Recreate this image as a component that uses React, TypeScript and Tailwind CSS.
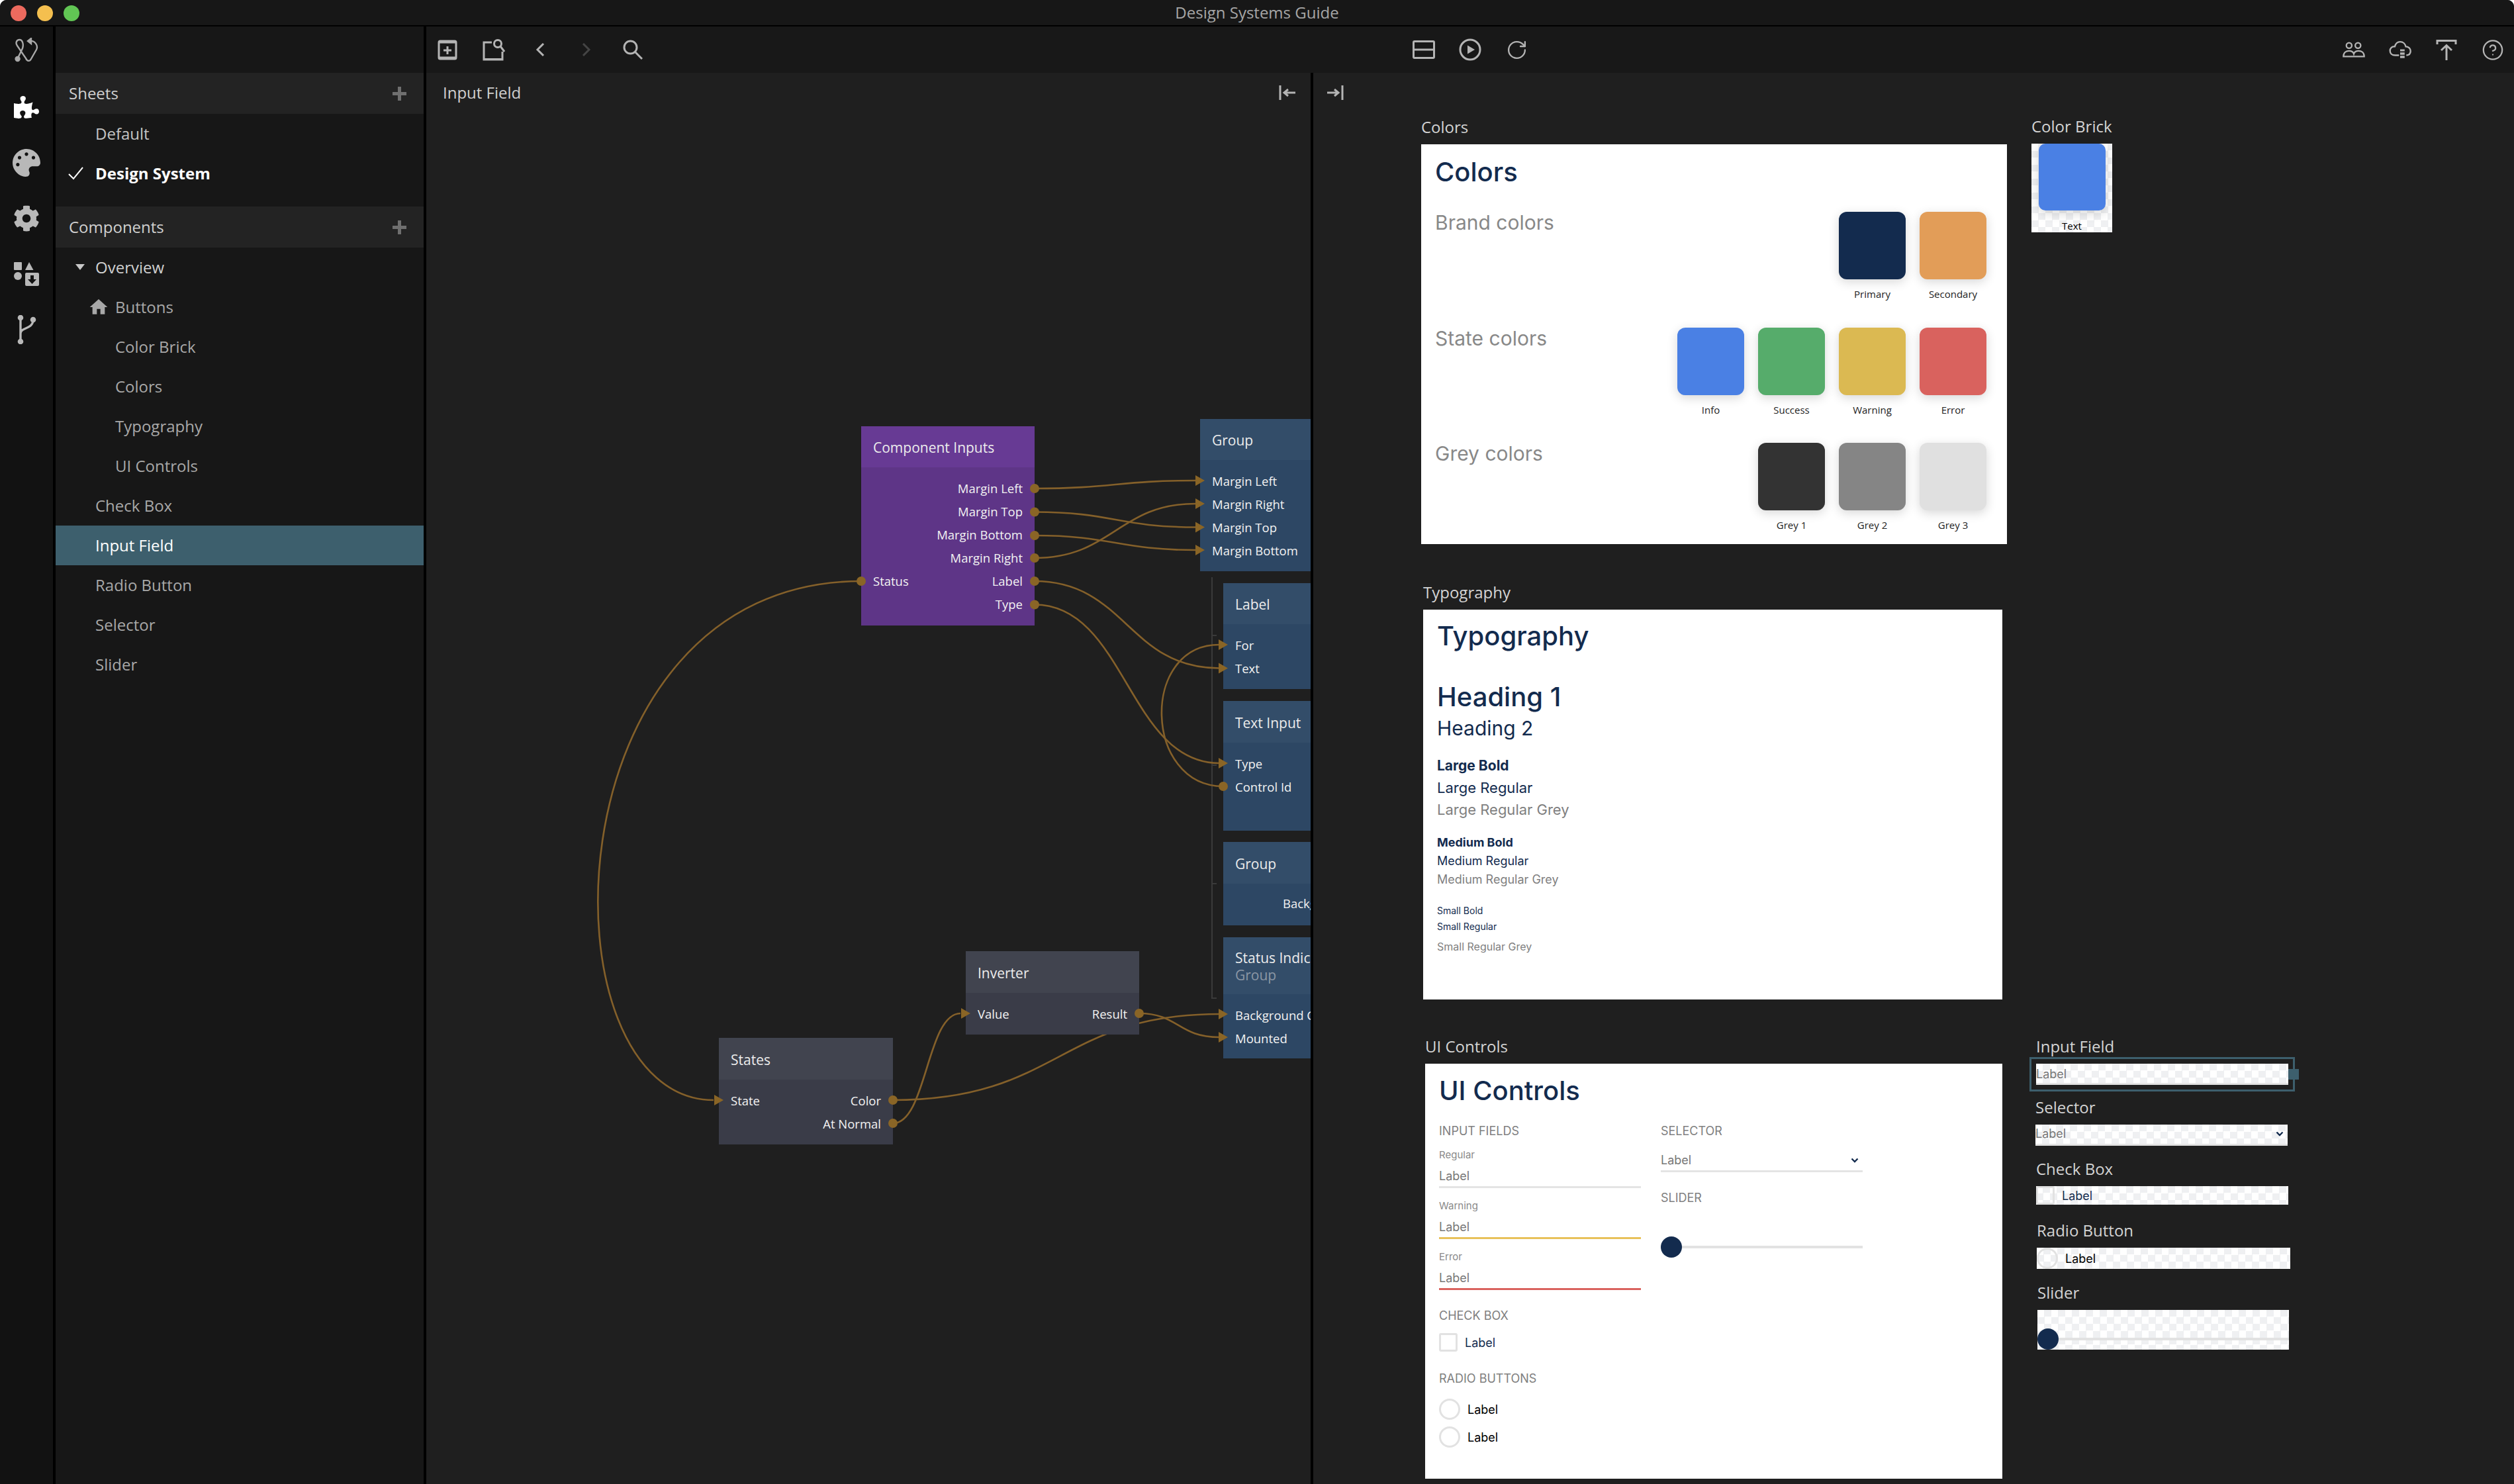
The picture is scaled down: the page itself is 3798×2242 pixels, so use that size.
import { FaPuzzlePiece, FaPalette, FaCog } from 'react-icons/fa'
import { MdHome } from 'react-icons/md'
import { RotateCw, CircleHelp } from 'lucide-react'
import type { ReactNode } from 'react'

const INK = '#b4b4b4'

const wires = [
  'M1563 738 C1680 738 1690 726 1806 726',
  'M1563 773.5 C1680 773.5 1690 796.5 1806 796.5',
  'M1563 809 C1680 809 1690 831 1806 831',
  'M1563 843 C1680 843 1690 761 1806 761',
  'M1563 878 C1700 878 1705 1009.5 1842 1009.5',
  'M1563 913.5 C1700 913.5 1705 1153 1842 1153',
  'M1848 1188 C1728 1188 1722 974 1842 974',
  'M1301 878 C821 878 813 1662 1078 1662',
  'M1349 1697 C1400 1697 1400 1531 1451 1531',
  'M1349 1662 C1600 1662 1600 1532 1842 1532',
  'M1721 1531 C1780 1531 1780 1567 1842 1567',
]

const dots = [
  [1563, 738], [1563, 773.5], [1563, 809], [1563, 843], [1563, 878], [1563, 913.5],
  [1301, 878], [1848, 1188], [1349, 1662], [1349, 1697], [1721, 1531],
]

const arrows = [
  [1813, 726], [1813, 761], [1813, 796.5], [1813, 831],
  [1848, 974], [1848, 1009.5], [1848, 1153], [1086, 1662], [1459, 1531], [1848, 1532], [1848, 1567],
]

const NODE = {
  purple: { head: 'bg-[#673a94]', body: 'bg-[#5e3587]' },
  blue: { head: 'bg-[#334d69]', body: 'bg-[#2d4764]' },
  grey: { head: 'bg-[#41444f]', body: 'bg-[#3a3c48]' },
}

type Row = { left?: string; right?: string }

function Node({ pos, kind, title, sub, headH, rows }: { pos: string; kind: keyof typeof NODE; title: string; sub?: string; headH: string; rows: Row[] }) {
  return (
    <div className={`absolute flex flex-col ${pos} ${NODE[kind].body}`}>
      <div className={`flex flex-col justify-center pl-[18px] pt-[2px] whitespace-nowrap ${headH} ${NODE[kind].head}`}>
        <div className="text-[21px] leading-[26px] text-[#ececec]">{title}</div>
        {sub && <div className="text-[21px] leading-[26px] text-[#8b97a5]">{sub}</div>}
      </div>
      <div className="pt-[14px] px-[18px]">
        {rows.map((r, i) => (
          <div key={i} className="flex justify-between h-[35px] items-center text-[18.5px] text-[#f2f2f2] whitespace-nowrap">
            <span>{r.left}</span>
            <span>{r.right}</span>
          </div>
        ))}
      </div>
    </div>
  )
}

function Canvas() {
  return (
    <div className="relative w-[1336px] h-full bg-[#1f1f1f] overflow-hidden">
      <div className="flex items-center justify-between h-[60px] pl-[25px] pr-[22px] text-[24px] text-[#cfcfcf]">
        <span>Input Field</span>
        <svg width="26" height="24" viewBox="0 0 26 24" fill="none" stroke={INK} strokeWidth="3">
          <path d="M2 1V23M25 12H9M14 7L8 12L14 17" />
        </svg>
      </div>
      <svg className="absolute inset-0" width="1336" height="2132" viewBox="644 110 1336 2132" fill="none">
        <path d="M1831 872V1508H1838M1831 960H1838M1831 1156H1838M1831 1335H1838" stroke="#3a3a3a" strokeWidth="2" />
        {wires.map((d, i) => <path key={i} d={d} stroke="#84602a" strokeWidth="2.6" />)}
      </svg>
      <Node pos="left-[657px] top-[534px] w-[262px] h-[301px]" kind="purple" title="Component Inputs" headH="h-[62px]" rows={[
        { right: 'Margin Left' }, { right: 'Margin Top' }, { right: 'Margin Bottom' }, { right: 'Margin Right' },
        { left: 'Status', right: 'Label' }, { right: 'Type' },
      ]} />
      <Node pos="left-[1169px] top-[523px] w-[220px] h-[230px]" kind="blue" title="Group" headH="h-[62px]" rows={[
        { left: 'Margin Left' }, { left: 'Margin Right' }, { left: 'Margin Top' }, { left: 'Margin Bottom' },
      ]} />
      <Node pos="left-[1204px] top-[771px] w-[220px] h-[160px]" kind="blue" title="Label" headH="h-[62px]" rows={[{ left: 'For' }, { left: 'Text' }]} />
      <Node pos="left-[1204px] top-[949px] w-[220px] h-[196px]" kind="blue" title="Text Input" headH="h-[63px]" rows={[{ left: 'Type' }, { left: 'Control Id' }]} />
      <Node pos="left-[1204px] top-[1162px] w-[220px] h-[126px]" kind="blue" title="Group" headH="h-[63px]" rows={[{ left: '', right: '' }]} />
      <span className="absolute left-[1294px] top-[1241px] text-[18.5px] leading-[28px] text-[#f2f2f2] whitespace-nowrap">Background Color</span>
      <Node pos="left-[1204px] top-[1306px] w-[260px] h-[183px]" kind="blue" title="Status Indicator" sub="Group" headH="h-[86px]" rows={[{ left: 'Background Color' }, { left: 'Mounted' }]} />
      <Node pos="left-[815px] top-[1327px] w-[262px] h-[126px]" kind="grey" title="Inverter" headH="h-[63px]" rows={[{ left: 'Value', right: 'Result' }]} />
      <Node pos="left-[442px] top-[1458px] w-[263px] h-[161px]" kind="grey" title="States" headH="h-[63px]" rows={[{ left: 'State', right: 'Color' }, { right: 'At Normal' }]} />
      <svg className="absolute inset-0" width="1336" height="2132" viewBox="644 110 1336 2132">
        {dots.map(([x, y], i) => <circle key={i} cx={x} cy={y} r="7" fill="#8a6526" />)}
        {arrows.map(([x, y], i) => <polygon key={i} points={`${x - 7},${y - 8} ${x + 7},${y} ${x - 7},${y + 8}`} fill="#8a6526" />)}
      </svg>
    </div>
  )
}

const CHECKER = 'bg-[conic-gradient(#eff0f2_25%,#ffffff_0_50%,#eff0f2_0_75%,#ffffff_0)] bg-[length:21px_21px]'

function Frame({ pos, label, children }: { pos: string; label: string; children: ReactNode }) {
  return (
    <div className={`absolute ${pos}`}>
      <div className="h-[32px] mb-[10px] text-[24px] leading-[32px] text-[#d4d4d4] whitespace-nowrap">{label}</div>
      {children}
    </div>
  )
}

function Swatch({ color, label }: { color: string; label: string }) {
  return (
    <div className="w-[101px] flex flex-col items-center">
      <div className={`w-[101px] h-[102px] rounded-[12px] shadow-[0_4px_16px_rgba(0,0,0,0.16)] ${color}`} />
      <div className="mt-[10px] text-[15px] leading-[24px] text-[#222] font-['Open_Sans',sans-serif]">{label}</div>
    </div>
  )
}

function SwatchRow({ title, children }: { title: string; children: ReactNode }) {
  return (
    <div className="flex justify-between h-[174.5px]">
      <div className="text-[30px] leading-[32px] text-[#888]">{title}</div>
      <div className="flex gap-[21px]">{children}</div>
    </div>
  )
}

function ColorsCard() {
  return (
    <div className="w-[885px] h-[604px] bg-white pt-[18px] pl-[21px] pr-[31px] font-['Inter',sans-serif]">
      <div className="text-[40px] leading-[48px] font-medium text-[#132b4e]">Colors</div>
      <div className="mt-[36px]">
        <SwatchRow title="Brand colors">
          <Swatch color="bg-[#132b4e]" label="Primary" />
          <Swatch color="bg-[#e29d58]" label="Secondary" />
        </SwatchRow>
        <SwatchRow title="State colors">
          <Swatch color="bg-[#4a80e4]" label="Info" />
          <Swatch color="bg-[#56ac6b]" label="Success" />
          <Swatch color="bg-[#dbb952]" label="Warning" />
          <Swatch color="bg-[#d9625e]" label="Error" />
        </SwatchRow>
        <SwatchRow title="Grey colors">
          <Swatch color="bg-[#333333]" label="Grey 1" />
          <Swatch color="bg-[#858585]" label="Grey 2" />
          <Swatch color="bg-[#e0e0e0]" label="Grey 3" />
        </SwatchRow>
      </div>
    </div>
  )
}

function TypographyCard() {
  return (
    <div className="w-[875px] h-[589px] bg-white pt-[16px] pl-[21px] font-['Inter',sans-serif] text-[#132b4e]">
      <div className="text-[40px] leading-[48px] font-medium">Typography</div>
      <div className="mt-[44px] text-[40px] leading-[48px] font-medium">Heading 1</div>
      <div className="mt-[3px] text-[30px] leading-[40px]">Heading 2</div>
      <div className="mt-[22px] text-[21px] leading-[30px] font-bold">Large Bold</div>
      <div className="mt-[2px] text-[22px] leading-[32px]">Large Regular</div>
      <div className="mt-[1px] text-[22px] leading-[32px] text-[#808080]">Large Regular Grey</div>
      <div className="mt-[21px] text-[18px] leading-[26px] font-bold">Medium Bold</div>
      <div className="mt-[2px] text-[18px] leading-[26px]">Medium Regular</div>
      <div className="mt-[2px] text-[18px] leading-[26px] text-[#808080]">Medium Regular Grey</div>
      <div className="mt-[24px] text-[14px] leading-[20px]">Small Bold</div>
      <div className="mt-[4px] text-[14px] leading-[20px]">Small Regular</div>
      <div className="mt-[10px] text-[16px] leading-[20px] text-[#808080]">Small Regular Grey</div>
    </div>
  )
}

function Caption({ children, className = '' }: { children: ReactNode; className?: string }) {
  return <div className={`text-[18px] leading-[24px] text-[#808080] ${className}`}>{children}</div>
}

function Chevron() {
  return (
    <svg width="12" height="8" viewBox="0 0 12 8" fill="none" stroke="#132b4e" strokeWidth="2.4">
      <path d="M1.5 1.5L6 6L10.5 1.5" />
    </svg>
  )
}

function InputField({ label, line }: { label?: string; line: string }) {
  return (
    <div>
      {label && <div className="h-[20px] mb-[8px] text-[15px] leading-[20px] text-[#8a8a8a]">{label}</div>}
      <div className="h-[26px] text-[18px] leading-[28px] text-[#777]">Label</div>
      <div className={`mt-[3px] h-[3px] ${line}`} />
    </div>
  )
}

function Selector() {
  return (
    <div>
      <div className="flex items-center justify-between h-[26px] pr-[6px] pt-[2px] text-[18px] leading-[26px] text-[#777]">
        <span>Label</span>
        <Chevron />
      </div>
      <div className="mt-[3px] h-[3px] bg-[#e4e4e4]" />
    </div>
  )
}

function CheckBox() {
  return (
    <div className="flex items-center h-[28px]">
      <div className="w-[28px] h-[28px] rounded-[3px] border-[3px] border-[#e2e2e2]" />
      <span className="ml-[11px] text-[18px] text-[#132b4e]">Label</span>
    </div>
  )
}

function Radio() {
  return (
    <div className="flex items-center h-[32px]">
      <div className="w-[32px] h-[32px] rounded-full border-[3px] border-[#e2e2e2]" />
      <span className="ml-[11px] text-[18px] text-black">Label</span>
    </div>
  )
}

function Slider() {
  return (
    <div className="flex items-center h-[32px]">
      <div className="w-[32px] h-[32px] rounded-full bg-[#132b4e] shrink-0" />
      <div className="flex-1 h-[4px] bg-[#e2e2e2]" />
    </div>
  )
}

function ControlsCard() {
  return (
    <div className="w-[872px] h-[627px] bg-white pt-[17px] pl-[21px] font-['Inter',sans-serif]">
      <div className="text-[40px] leading-[48px] font-medium text-[#132b4e]">UI Controls</div>
      <div className="mt-[25px] flex gap-[30px]">
        <div className="w-[305px]">
          <Caption>INPUT FIELDS</Caption>
          <div className="mt-[14px] flex flex-col gap-[17px]">
            <InputField label="Regular" line="bg-[#e4e4e4]" />
            <InputField label="Warning" line="bg-[#e8c15a]" />
            <InputField label="Error" line="bg-[#d9625e]" />
          </div>
          <Caption className="mt-[27px]">CHECK BOX</Caption>
          <div className="mt-[14px]"><CheckBox /></div>
          <Caption className="mt-[29px]">RADIO BUTTONS</Caption>
          <div className="mt-[18px] flex flex-col gap-[10px]">
            <Radio />
            <Radio />
          </div>
        </div>
        <div className="w-[305px]">
          <Caption>SELECTOR</Caption>
          <div className="mt-[18px]"><Selector /></div>
          <Caption className="mt-[27px]">SLIDER</Caption>
          <div className="mt-[46px]"><Slider /></div>
        </div>
      </div>
    </div>
  )
}

function Preview() {
  return (
    <div className="relative flex-1 h-full bg-[#1f1f1f] overflow-hidden">
      <div className="h-[60px] flex items-center pl-[20px]">
        <svg width="26" height="24" viewBox="0 0 26 24" fill="none" stroke={INK} strokeWidth="3">
          <path d="M24 1V23M1 12H17M12 7L18 12L12 17" />
        </svg>
      </div>
      <Frame pos="left-[163px] top-[66px]" label="Colors"><ColorsCard /></Frame>
      <Frame pos="left-[1085px] top-[65px]" label="Color Brick">
        <div className={`relative w-[122px] h-[134px] ${CHECKER}`}>
          <div className="mx-auto w-[101px] h-[101px] rounded-[10px] bg-[#4a80e4] shadow-[0_4px_16px_rgba(0,0,0,0.16)]" />
          <div className="mt-[11px] text-center text-[15px] leading-[24px] text-black">Text</div>
        </div>
      </Frame>
      <Frame pos="left-[166px] top-[769px]" label="Typography"><TypographyCard /></Frame>
      <Frame pos="left-[169px] top-[1455px]" label="UI Controls"><ControlsCard /></Frame>
      <Frame pos="left-[1092px] top-[1455px]" label="Input Field">
        <div className="relative w-[381px] h-[32px] font-['Inter',sans-serif]">
          <div className={`h-[32px] ${CHECKER}`}>
            <div className="h-[29px] text-[18px] leading-[31px] text-[#777]">Label</div>
            <div className="h-[3px] bg-[#e4e4e4]" />
          </div>
          <div className="absolute -left-[10px] -top-[10px] w-[401px] h-[52px] border-[3px] border-[#3d5f6d]" />
          <div className="absolute -right-[16px] top-[8px] w-[16px] h-[16px] bg-[#3d5f6d]" />
        </div>
      </Frame>
      <Frame pos="left-[1091px] top-[1547px]" label="Selector">
        <div className={`w-[381px] h-[32px] font-['Inter',sans-serif] ${CHECKER}`}><Selector /></div>
      </Frame>
      <Frame pos="left-[1092px] top-[1640px]" label="Check Box">
        <div className={`w-[381px] h-[28px] font-['Inter',sans-serif] ${CHECKER}`}><CheckBox /></div>
      </Frame>
      <Frame pos="left-[1093px] top-[1733px]" label="Radio Button">
        <div className={`w-[383px] h-[32px] font-['Inter',sans-serif] ${CHECKER}`}><Radio /></div>
      </Frame>
      <Frame pos="left-[1094px] top-[1827px]" label="Slider">
        <div className={`w-[380px] h-[60px] pt-[28px] ${CHECKER}`}><Slider /></div>
      </Frame>
    </div>
  )
}

function Tb({ children }: { children: ReactNode }) {
  return <div className="w-[34px] h-[40px] flex items-center justify-center">{children}</div>
}

function Toolbar() {
  return (
    <div className="h-[70px] flex items-center pl-[15px] pr-[15px] bg-[#181818] shrink-0">
      <div className="flex gap-[36px]">
        <Tb>
          <svg width="30" height="31" viewBox="0 0 30 31" fill="none" stroke={INK} strokeWidth="3">
            <rect x="2" y="2" width="26" height="27" rx="2" />
            <path d="M2 4H28M2 27H28M15 10V22M9 16H21" />
          </svg>
        </Tb>
        <Tb>
          <svg width="34" height="35" viewBox="0 0 34 35" fill="none" stroke={INK} strokeWidth="3">
            <path d="M14 6H2V32H30V20M2 31.5H30" />
            <circle cx="23" cy="8" r="5.5" />
            <path d="M27 12L33 20" />
          </svg>
        </Tb>
        <Tb>
          <svg width="14" height="20" viewBox="0 0 14 20" fill="none" stroke={INK} strokeWidth="3">
            <path d="M12 1L3 10L12 19" />
          </svg>
        </Tb>
        <Tb>
          <svg width="14" height="20" viewBox="0 0 14 20" fill="none" stroke="#444" strokeWidth="3">
            <path d="M2 1L11 10L2 19" />
          </svg>
        </Tb>
        <Tb>
          <svg width="30" height="30" viewBox="0 0 30 30" fill="none" stroke={INK} strokeWidth="3">
            <circle cx="11.5" cy="11.5" r="9.5" />
            <path d="M18 18L29 29" />
          </svg>
        </Tb>
      </div>
      <div className="ml-[1161px] flex gap-[36px]">
        <Tb>
          <svg width="34" height="28" viewBox="0 0 34 28" fill="none" stroke={INK} strokeWidth="3">
            <rect x="1.5" y="1.5" width="31" height="25" rx="1.5" />
            <path d="M1.5 14H32.5" />
          </svg>
        </Tb>
        <Tb>
          <svg width="34" height="34" viewBox="0 0 34 34" fill="none">
            <circle cx="17" cy="17" r="15" stroke={INK} strokeWidth="3" />
            <path d="M13 10.5L24 17L13 23.5Z" fill={INK} />
          </svg>
        </Tb>
        <Tb><RotateCw size={33} color={INK} strokeWidth={1.7} /></Tb>
      </div>
      <div className="ml-auto flex gap-[36px]">
        <Tb>
          <svg width="38" height="26" viewBox="0 0 38 26" fill="none" stroke={INK} strokeWidth="2.6">
            <circle cx="11" cy="6" r="4.6" />
            <circle cx="26" cy="6" r="4.6" />
            <path d="M1.5 24.5C1.5 18 6 15 11 15C15 15 18 17 19 20C20 17 23 15 27 15C32 15 36.5 18 36.5 24.5Z" />
          </svg>
        </Tb>
        <Tb>
          <svg width="40" height="32" viewBox="0 0 40 32" fill="none">
            <path d="M18 26H11C5.5 26 2 22.5 2 18C2 13.5 5.5 10 10.5 10.5C12 5 16 2 20 2C25.5 2 29 6 30 10.5C35 10.5 38.5 14 38.5 18.5C38.5 22.5 36 25.5 31 26" stroke={INK} strokeWidth="2.8" />
            <path d="M20 15.5H28V19H20ZM20 21H28V25H20ZM20 27H28V31H20Z" fill={INK} />
          </svg>
        </Tb>
        <Tb>
          <svg width="32" height="32" viewBox="0 0 32 32" fill="none" stroke={INK} strokeWidth="3">
            <path d="M2 8V2.5H30V8M16 32V10M8 17L16 9.5L24 17" />
          </svg>
        </Tb>
        <Tb><CircleHelp size={37} color={INK} strokeWidth={1.6} /></Tb>
      </div>
    </div>
  )
}

function SectionHead({ title }: { title: string }) {
  return (
    <div className="h-[62px] flex items-center justify-between pl-[20px] pr-[26px] bg-[#232323] text-[24px] text-[#d0d0d0]">
      <span>{title}</span>
      <svg width="21" height="21" viewBox="0 0 21 21" fill="#6f6f6f">
        <path d="M8 0H13V8H21V13H13V21H8V13H0V8H8Z" />
      </svg>
    </div>
  )
}

function Item({ children, className = '' }: { children: ReactNode; className?: string }) {
  return <div className={`relative h-[60px] flex items-center text-[24px] ${className}`}>{children}</div>
}

function Sidebar() {
  return (
    <div className="w-[556px] h-full pt-[70px] bg-[#171717] shrink-0">
      <SectionHead title="Sheets" />
      <Item className="pl-[60px] text-[#c4c4c4]">Default</Item>
      <Item className="pl-[60px] text-white font-bold">
        <svg className="absolute left-[19px] top-[20px]" width="23" height="20" viewBox="0 0 23 20" fill="none" stroke="#ffffff" strokeWidth="2">
          <path d="M1 11L8 18L22 1" />
        </svg>
        Design System
      </Item>
      <div className="h-[20px]" />
      <SectionHead title="Components" />
      <Item className="pl-[60px] text-[#d0d0d0]">
        <svg className="absolute left-[30px] top-[25px]" width="14" height="9" viewBox="0 0 14 9" fill="#c8c8c8">
          <path d="M0 0H14L7 9Z" />
        </svg>
        Overview
      </Item>
      <Item className="pl-[90px] text-[#a8a8a8]">
        <MdHome className="absolute left-[49px] top-[14px]" size={32} color="#a8a8a8" />
        Buttons
      </Item>
      {['Color Brick', 'Colors', 'Typography', 'UI Controls'].map((n) => (
        <Item key={n} className="pl-[90px] text-[#a8a8a8]">{n}</Item>
      ))}
      <Item className="pl-[60px] text-[#a8a8a8]">Check Box</Item>
      <Item className="pl-[60px] text-white bg-[#3d5f6d]">Input Field</Item>
      {['Radio Button', 'Selector', 'Slider'].map((n) => (
        <Item key={n} className="pl-[60px] text-[#a8a8a8]">{n}</Item>
      ))}
    </div>
  )
}

function Rail() {
  return (
    <div className="w-[80px] h-full flex flex-col items-center bg-[#121212] shrink-0">
      <div className="h-[70px] flex items-center justify-center">
        <svg width="36" height="37" viewBox="0 0 36 37" fill="none" stroke="#a8a8a8" strokeWidth="2.4">
          <path d="M4.6 31.6L12 16C14 10 12 3 7.5 3C3 3 1 8 4 12L17 31C19 36 23 36 25 32L33 18C36 12 31 4 23 5" />
          <circle cx="4.6" cy="32" r="3" fill="#a8a8a8" />
          <path d="M25 1L20 5L25 9Z" fill="#a8a8a8" />
        </svg>
      </div>
      <div className="mt-[10px] flex flex-col items-center">
        <div className="h-[84px] flex items-center"><FaPuzzlePiece size={38} color="#ffffff" /></div>
        <div className="h-[84px] flex items-center"><FaPalette size={42} color="#b8b8b8" /></div>
        <div className="h-[84px] flex items-center"><FaCog size={40} color="#b8b8b8" /></div>
        <div className="h-[84px] flex items-center">
          <svg width="38" height="37" viewBox="0 0 38 37" fill="#b8b8b8">
            <rect x="0" y="0" width="12" height="12" rx="1" />
            <path d="M17 12L23 0L29.5 12Z" />
            <circle cx="6" cy="21" r="6" />
            <path d="M19 16H36A2 2 0 0 1 38 18V34A2 2 0 0 1 36 36H19A2 2 0 0 1 17 34V18A2 2 0 0 1 19 16ZM25 20V26H21L27.5 33L34 26H30V20Z" fillRule="evenodd" />
          </svg>
        </div>
        <div className="h-[84px] flex items-center">
          <svg width="30" height="44" viewBox="0 0 30 44" fill="none" stroke="#b8b8b8" strokeWidth="3.4">
            <path d="M6 4V40M6 28C6 18 24 22 25 8" />
            <circle cx="6" cy="4" r="2.6" fill="#b8b8b8" />
            <circle cx="6" cy="40" r="2.6" fill="#b8b8b8" />
            <circle cx="25" cy="7" r="2.6" fill="#b8b8b8" />
          </svg>
        </div>
      </div>
    </div>
  )
}

export default function App() {
  return (
    <div className="w-[3798px] h-[2242px] flex flex-col overflow-hidden rounded-t-[10px] bg-black font-['Open_Sans',sans-serif]">
      <div className="relative h-[38px] flex items-center justify-center bg-[#171717] shrink-0 text-[24px] text-[#a6a6a6]">
        <div className="absolute left-[16px] top-[8px] flex gap-[16px]">
          <div className="w-[24px] h-[24px] rounded-full bg-[#ed6a5e]" />
          <div className="w-[24px] h-[24px] rounded-full bg-[#f4bf4f]" />
          <div className="w-[24px] h-[24px] rounded-full bg-[#61c554]" />
        </div>
        Design Systems Guide
      </div>
      <div className="h-[2px] bg-black shrink-0" />
      <div className="flex flex-1 min-h-0 gap-[4px]">
        <Rail />
        <Sidebar />
        <div className="flex-1 min-w-0 flex flex-col">
          <Toolbar />
          <div className="flex flex-1 min-h-0 gap-[4px]">
            <Canvas />
            <Preview />
          </div>
        </div>
      </div>
    </div>
  )
}
